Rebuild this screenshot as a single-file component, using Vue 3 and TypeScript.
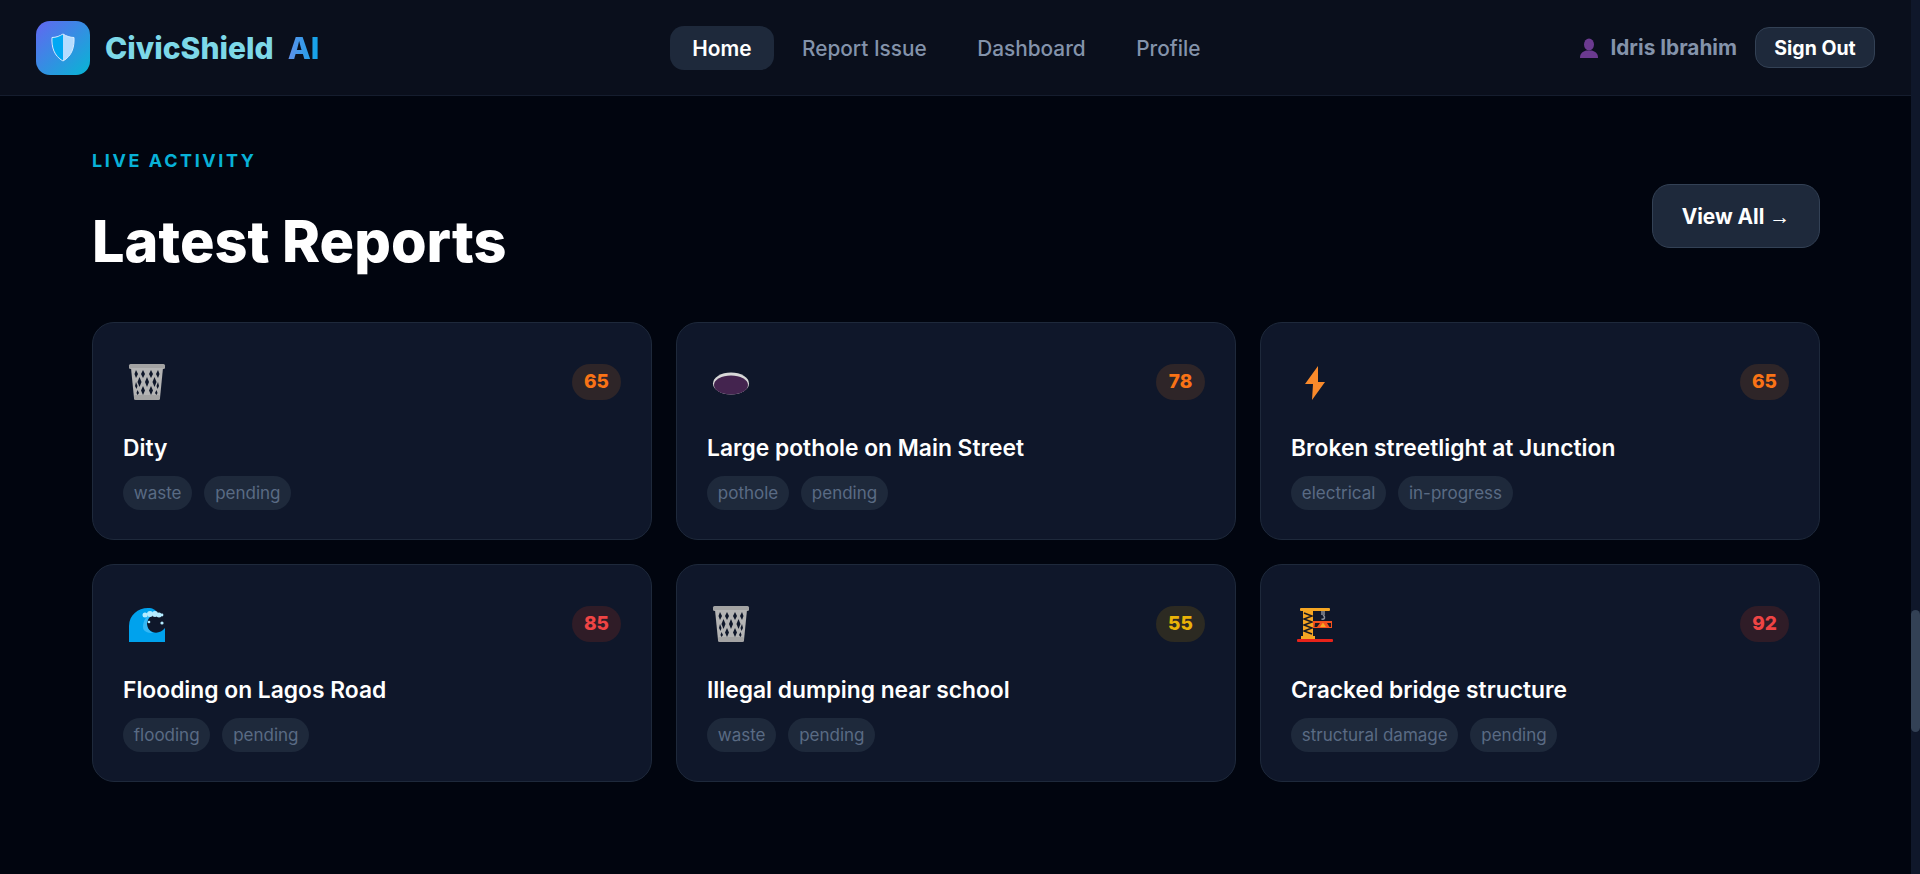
<script setup lang="ts">
type Report = {
  title: string;
  icon: 'trash' | 'hole' | 'zap' | 'wave' | 'crane';
  score: number;
  tags: string[];
};

const links = ['Home', 'Report Issue', 'Dashboard', 'Profile'];

const reports: Report[] = [
  { title: 'Dity', icon: 'trash', score: 65, tags: ['waste', 'pending'] },
  { title: 'Large pothole on Main Street', icon: 'hole', score: 78, tags: ['pothole', 'pending'] },
  { title: 'Broken streetlight at Junction', icon: 'zap', score: 65, tags: ['electrical', 'in-progress'] },
  { title: 'Flooding on Lagos Road', icon: 'wave', score: 85, tags: ['flooding', 'pending'] },
  { title: 'Illegal dumping near school', icon: 'trash', score: 55, tags: ['waste', 'pending'] },
  { title: 'Cracked bridge structure', icon: 'crane', score: 92, tags: ['structural damage', 'pending'] },
];

function scoreClass(score: number) {
  if (score >= 80) return 'score-high';
  if (score >= 60) return 'score-mid';
  return 'score-low';
}
</script>

<template>
  <div class="page">
    <header class="topbar">
      <div class="brand">
        <div class="logo">
          <svg width="24" height="29" viewBox="0 0 24 29">
            <path d="M12 1 C15 3 19 4.500 23 4.500 C23.500 14 21 23 12 28 C3 23 .5 14 1 4.500 C5 4.500 9 3 12 1Z" fill="#b5dcff" stroke="#d8ecff" stroke-width="1" />
            <path d="M12 1.500 C9 3.500 5 4.800 1.500 5 C1 14 3.500 22.500 12 27.500Z" fill="#00a8f3" />
          </svg>
        </div>
        <span class="brand-name">CivicShield</span>
        <span class="brand-ai">AI</span>
      </div>

      <nav class="links">
        <a v-for="link in links" :key="link" class="link" :class="{ active: link === 'Home' }">{{ link }}</a>
      </nav>

      <div class="user">
        <svg class="user-icon" width="20" height="20" viewBox="0 0 20 20">
          <ellipse cx="10" cy="6.500" rx="5" ry="6" fill="#6b3a8f" />
          <path d="M1 20 C1 15 4 13.500 7 12.500 L13 12.500 C16 13.500 19 15 19 20Z" fill="#6b3a8f" />
        </svg>
        <span class="user-name">Idris Ibrahim</span>
        <button class="signout">Sign Out</button>
      </div>
    </header>

    <main class="content">
      <div class="section-head">
        <div>
          <div class="eyebrow">LIVE ACTIVITY</div>
          <h1 class="heading">Latest Reports</h1>
        </div>
        <button class="view-all">View All <span class="arrow">→</span></button>
      </div>

      <div class="grid">
        <article v-for="report in reports" :key="report.title" class="card">
          <div class="card-top">
            <svg v-if="report.icon === 'trash'" class="icon" width="48" height="48" viewBox="0 0 48 48">
              <rect x="6" y="6" width="36" height="5" rx="1.500" fill="#a3a3a3" />
              <path d="M8 10 H40 L37 40 H11Z" fill="#b4b4b4" />
              <g fill="#0f172a">
                <path d="M13 12 L15 16 L13 20 L11.500 16Z" />
                <path d="M20 12 L22 16 L20 20 L18 16Z" />
                <path d="M28 12 L30 16 L28 20 L26 16Z" />
                <path d="M35 12 L36.500 16 L35 20 L33 16Z" />
                <path d="M16.500 19 L18.500 24 L16.500 29 L14.500 24Z" />
                <path d="M24 19 L26 24 L24 29 L22 24Z" />
                <path d="M31.500 19 L33.500 24 L31.500 29 L29.500 24Z" />
                <path d="M13 24 L14.500 28 L13.500 31 L12 28Z" />
                <path d="M35 24 L36 28 L34.500 31 L33.500 28Z" />
                <path d="M20 28 L22 32.500 L20 37 L18 32.500Z" />
                <path d="M28 28 L30 32.500 L28 37 L26 32.500Z" />
                <path d="M14.500 32 L16 35 L14.500 37 L13.500 35Z" />
                <path d="M33.500 32 L34.500 35 L33.500 37 L32 35Z" />
              </g>
              <rect x="11" y="37" width="26" height="5" rx="1.500" fill="#a3a3a3" />
            </svg>

            <svg v-else-if="report.icon === 'hole'" class="icon" width="48" height="48" viewBox="0 0 48 48">
              <ellipse cx="24" cy="25.500" rx="18" ry="11" fill="#d8d8d8" />
              <ellipse cx="24" cy="27" rx="17" ry="9.500" fill="#44244f" />
            </svg>

            <svg v-else-if="report.icon === 'zap'" class="icon" width="48" height="48" viewBox="0 0 48 48">
              <path d="M27 8 L14 26 H22 L21 42 L34 24 H27Z" fill="#f98a2b" />
            </svg>

            <svg v-else-if="report.icon === 'wave'" class="icon" width="48" height="48" viewBox="0 0 48 48">
              <path d="M6 42 V26 C6 15 15 8 25 8 C30 8 33 10 34 13 C29 14 24 19 24 24 C24 33 36 36 42 28 V42Z" fill="#00a2ed" />
              <path d="M20 27 C20 20 24 15 30 13 C26 16 24 20 24 24 C24 28 26 31 30 33 C24 33 20 31 20 27Z" fill="#35b8f5" />
              <g fill="#b5ecff">
                <circle cx="22" cy="15" r="2.500" />
                <circle cx="27" cy="14" r="3" />
                <circle cx="32" cy="14" r="3" />
                <circle cx="36" cy="15" r="2.500" />
                <circle cx="39" cy="15" r="1.400" />
                <circle cx="26" cy="22" r="1.300" />
                <circle cx="39" cy="23" r="1.600" />
              </g>
            </svg>

            <svg v-else class="icon" width="48" height="48" viewBox="0 0 48 48">
              <rect x="9" y="8" width="30" height="3" rx="1" fill="#f5a623" />
              <rect x="12" y="11" width="10" height="26" fill="#f5a623" />
              <path d="M13 13 L21 16 L13 19 L21 22 L13 25 L21 28 L13 31 L21 34" stroke="#1a1a22" stroke-width="1.500" fill="none" />
              <rect x="10" y="36" width="14" height="3" fill="#f5a623" />
              <rect x="6" y="39" width="36" height="3" rx="1" fill="#e8231a" />
              <path d="M31 11 V15 M33 11 V15 M32 15 C34.500 16.500 34 20 30.500 19" stroke="#8a8f98" stroke-width="1.500" fill="none" />
              <path d="M22 21 H41 V28 H22Z" fill="#f4511e" />
              <path d="M24 23 H29 L26 27 H23.500Z M40 23 H36 L38.500 27 H40Z" fill="#1a1a22" />
              <path d="M32 22.500 L35 27 H29Z" fill="#f5a623" />
            </svg>

            <span class="score" :class="scoreClass(report.score)">{{ report.score }}</span>
          </div>
          <h3 class="card-title">{{ report.title }}</h3>
          <div class="tags">
            <span v-for="tag in report.tags" :key="tag" class="tag">{{ tag }}</span>
          </div>
        </article>
      </div>
    </main>

    <div class="scrollbar">
      <div class="thumb"></div>
    </div>
  </div>
</template>

<style>
html,
body {
  margin: 0;
  background: #01050f;
  overflow: hidden;
}
</style>

<style scoped>
.page {
  position: relative;
  height: 874px;
  box-sizing: border-box;
  padding-right: 9px;
  background: #01050f;
  font-family: Inter, 'Liberation Sans', sans-serif;
  overflow: hidden;
}

.topbar {
  display: flex;
  align-items: center;
  justify-content: space-between;
  height: 96px;
  box-sizing: border-box;
  padding: 0 36px;
  background: #0a0f1c;
  border-bottom: 1px solid #151d2e;
}

.brand {
  display: flex;
  align-items: center;
}

.logo {
  display: flex;
  align-items: center;
  justify-content: center;
  width: 54px;
  height: 54px;
  border-radius: 14px;
  background: linear-gradient(135deg, #6366f1, #06b6d4);
  margin-right: 15px;
}

.brand-name {
  font-size: 30px;
  font-weight: 800;
  color: #7dd8e8;
}

.brand-ai {
  margin-left: 14px;
  font-size: 30px;
  font-weight: 800;
  background: linear-gradient(90deg, #6090ea, #0ea5e9);
  -webkit-background-clip: text;
  background-clip: text;
  color: transparent;
}

.links {
  display: flex;
  align-items: center;
  gap: 6.500px;
  margin-right: 6px;
}

.link {
  padding: 0 22px;
  height: 44px;
  line-height: 45px;
  border-radius: 14px;
  font-size: 20.800px;
  font-weight: 500;
  color: #8493ab;
}

.link.active {
  background: #1e293b;
  color: #ffffff;
  font-weight: 600;
}

.user {
  display: flex;
  align-items: center;
}

.user-icon {
  margin-right: 11px;
}

.user-name {
  font-size: 20.800px;
  font-weight: 700;
  color: #8493ab;
  margin-right: 18px;
}

.signout {
  width: 120px;
  height: 41px;
  border: 1px solid #334155;
  border-radius: 14px;
  background: #1e293b;
  color: #ffffff;
  font-family: inherit;
  font-size: 19.500px;
  font-weight: 700;
}

.content {
  padding: 54px 91px 0 92px;
}

.section-head {
  display: flex;
  justify-content: space-between;
  align-items: flex-end;
  margin-bottom: 47px;
}

.eyebrow {
  font-size: 18px;
  line-height: 21px;
  font-weight: 700;
  letter-spacing: 2.600px;
  color: #08b2d8;
}

.heading {
  margin: 36px 0 0;
  font-size: 57.600px;
  line-height: 68px;
  font-weight: 800;
  color: #ffffff;
}

.view-all {
  width: 168px;
  height: 64px;
  margin-bottom: 27px;
  border: 1px solid #334155;
  border-radius: 18px;
  background: #1e293b;
  color: #ffffff;
  font-family: inherit;
  font-size: 20.800px;
  font-weight: 700;
}

.arrow {
  font-family: 'Liberation Sans', sans-serif;
  font-size: 21px;
  line-height: 1;
  font-weight: 400;
}

.grid {
  display: grid;
  grid-template-columns: repeat(3, 1fr);
  gap: 24px;
}

.card {
  box-sizing: border-box;
  padding: 30px 30px 29px;
  border: 1px solid #1e293b;
  border-radius: 22px;
  background: #0f172a;
}

.card-top {
  display: flex;
  align-items: center;
  justify-content: space-between;
  height: 57px;
  margin-bottom: 23px;
}

.icon {
  display: block;
}

.score {
  width: 49px;
  height: 36px;
  line-height: 36px;
  border-radius: 18px;
  text-align: center;
  font-size: 19px;
  font-weight: 800;
}

.score-high {
  background: #2f1c27;
  color: #ef4444;
}

.score-mid {
  background: #2e2528;
  color: #f97316;
}

.score-low {
  background: #2c2a22;
  color: #eab308;
}

.card-title {
  margin: 0 0 13px;
  font-size: 22.800px;
  line-height: 30px;
  font-weight: 600;
  color: #ffffff;
}

.tags {
  display: flex;
  gap: 12px;
}

.tag {
  height: 34px;
  line-height: 34px;
  padding: 0 10.800px;
  border-radius: 17px;
  background: #1e293b;
  color: #5a6b84;
  font-size: 17px;
}

.scrollbar {
  position: absolute;
  top: 0;
  right: 0;
  width: 9px;
  height: 874px;
  background: #0f172a;
}

.thumb {
  position: absolute;
  top: 610px;
  left: 0;
  width: 9px;
  height: 122px;
  border-radius: 5px;
  background: #334155;
}
</style>
